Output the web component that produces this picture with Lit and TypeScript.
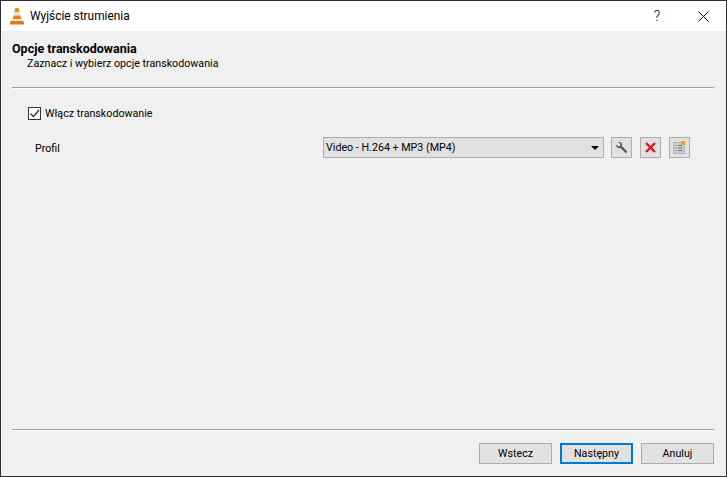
import { LitElement, css, html } from 'lit';
import { customElement } from 'lit/decorators.js';

@customElement('app-root')
export class AppRoot extends LitElement {
  static override styles = css`
    :host {
      display: block;
      font-family: Roboto, Lato, sans-serif;
      font-size: 10.7px;
      color: #000;
    }

    * {
      box-sizing: border-box;
    }

    .window {
      width: 727px;
      height: 477px;
      border: 1px solid #2f2f2f;
      background: #f0f0f0;
      display: flex;
      flex-direction: column;
    }

    .titlebar {
      height: 30px;
      background: #fff;
      display: flex;
      align-items: center;
      padding-left: 8px;
      flex: none;
    }

    .titlebar .title {
      margin-left: 5px;
      font-size: 11.9px;
      flex: 1;
      white-space: nowrap;
    }

    .help {
      width: 46px;
      text-align: center;
      font-size: 14px;
      font-weight: 300;
    }

    .close {
      width: 46px;
      display: flex;
      justify-content: center;
    }

    .body {
      flex: 1;
      display: flex;
      flex-direction: column;
      padding: 10px 12px 12px 11px;
    }

    .heading {
      font-size: 12.5px;
      font-weight: 700;
      line-height: 15px;
    }

    .subheading {
      padding-left: 15px;
      line-height: 15px;
    }

    .rule {
      border-top: 1px solid #a0a0a0;
      border-bottom: 1px solid #fff;
      height: 2px;
      flex: none;
    }

    .rule.top {
      margin-top: 16px;
    }

    .content {
      flex: 1;
      padding: 16px 0 0 16px;
    }

    .check-row {
      display: flex;
      align-items: center;
      height: 16px;
      gap: 4px;
    }

    .checkbox {
      width: 13px;
      height: 13px;
      border: 1px solid #333;
      background: #fff;
      display: flex;
      flex: none;
    }

    .profile-row {
      display: flex;
      align-items: center;
      margin-top: 16px;
      height: 21px;
      padding-left: 7px;
    }

    .profile-label {
      width: 288px;
      padding-top: 1px;
      flex: none;
    }

    .combo {
      width: 281px;
      height: 21px;
      border: 1px solid #adadad;
      background: #e1e1e1;
      display: flex;
      align-items: center;
      justify-content: space-between;
      padding: 0 4px 0 2px;
      flex: none;
    }

    .arrow {
      width: 0;
      height: 0;
      border-left: 4px solid transparent;
      border-right: 4px solid transparent;
      border-top: 4px solid #000;
    }

    .tool {
      width: 21px;
      height: 21px;
      border: 1px solid #adadad;
      background: #e1e1e1;
      margin-left: 8px;
      display: flex;
      align-items: center;
      justify-content: center;
      flex: none;
    }

    .combo + .tool {
      margin-left: 7px;
    }

    .footer {
      display: flex;
      justify-content: flex-end;
      gap: 8px;
      padding-top: 12px;
    }

    .button {
      width: 73px;
      height: 21px;
      border: 1px solid #adadad;
      background: #e1e1e1;
      display: flex;
      align-items: center;
      justify-content: center;
    }

    .button.default {
      border: 2px solid #0078d7;
    }
  `;

  override render() {
    return html`
      <div class="window">
        <div class="titlebar">
          <svg width="16" height="17" viewBox="0 0 16 17">
            <path d="M6.300 0h3.400l1 4.200H5.300z" fill="#ef8a1c" />
            <path d="M5.300 4.200h5.400l.8 3.300h-7z" fill="#e6e6e6" />
            <path d="M4.500 7.500h7l.9 3.800H3.600z" fill="#ee8412" />
            <path d="M3.600 11.300h8.800l.4 1.700H3.200z" fill="#eeeeee" />
            <path d="M1 14l2.400-2v1h9.200v-1L15 14v2.500H1z" fill="#e8760a" />
          </svg>
          <span class="title">Wyjście strumienia</span>
          <span class="help">?</span>
          <span class="close">
            <svg width="11" height="11" viewBox="0 0 11 11">
              <path d="M.5.500l10 10M10.500.500l-10 10" stroke="#000" fill="none" />
            </svg>
          </span>
        </div>
        <div class="body">
          <div class="heading">Opcje transkodowania</div>
          <div class="subheading">Zaznacz i wybierz opcje transkodowania</div>
          <div class="rule top"></div>
          <div class="content">
            <div class="check-row">
              <span class="checkbox">
                <svg width="11" height="11" viewBox="0 0 11 11">
                  <path d="M1.500 5.500l3 3 5.500-6.500" stroke="#333" stroke-width="1.300" fill="none" />
                </svg>
              </span>
              <span>Włącz transkodowanie</span>
            </div>
            <div class="profile-row">
              <span class="profile-label">Profil</span>
              <div class="combo">
                <span>Video - H.264 + MP3 (MP4)</span>
                <span class="arrow"></span>
              </div>
              <div class="tool">
                <svg width="13" height="13" viewBox="0 0 13 13">
                  <path
                    d="M1.500 3.500 3.500 5.500 5.500 4.800 5 2.500 3 1.200C5 .6 7 1.500 7.200 3.500L7 5l5 5.200c.6.8-.8 2.200-1.600 1.500L5.300 7 3.800 7.200C1.800 7 .8 5.200 1.500 3.500z"
                    fill="#5a5a5a"
                  />
                </svg>
              </div>
              <div class="tool">
                <svg width="13" height="13" viewBox="0 0 13 13">
                  <path d="M2 2l9 9M11 2l-9 9" stroke="#e0141c" stroke-width="2.400" fill="none" />
                </svg>
              </div>
              <div class="tool">
                <svg width="13" height="13" viewBox="0 0 13 13">
                  <rect x="0.500" y="1.500" width="11" height="11" fill="#cccccc" stroke="#b4b4b4" />
                  <path d="M2.500 4.500h1M2.500 7h1M2.500 9.500h1M5 4.500h4M5 7h4.500M5 9.500h4.500" stroke="#777" fill="none" />
                  <rect x="8" y="0" width="4" height="4" fill="#ff9c10" />
                </svg>
              </div>
            </div>
          </div>
          <div class="rule"></div>
          <div class="footer">
            <div class="button">Wstecz</div>
            <div class="button default">Następny</div>
            <div class="button">Anuluj</div>
          </div>
        </div>
      </div>
    `;
  }
}
